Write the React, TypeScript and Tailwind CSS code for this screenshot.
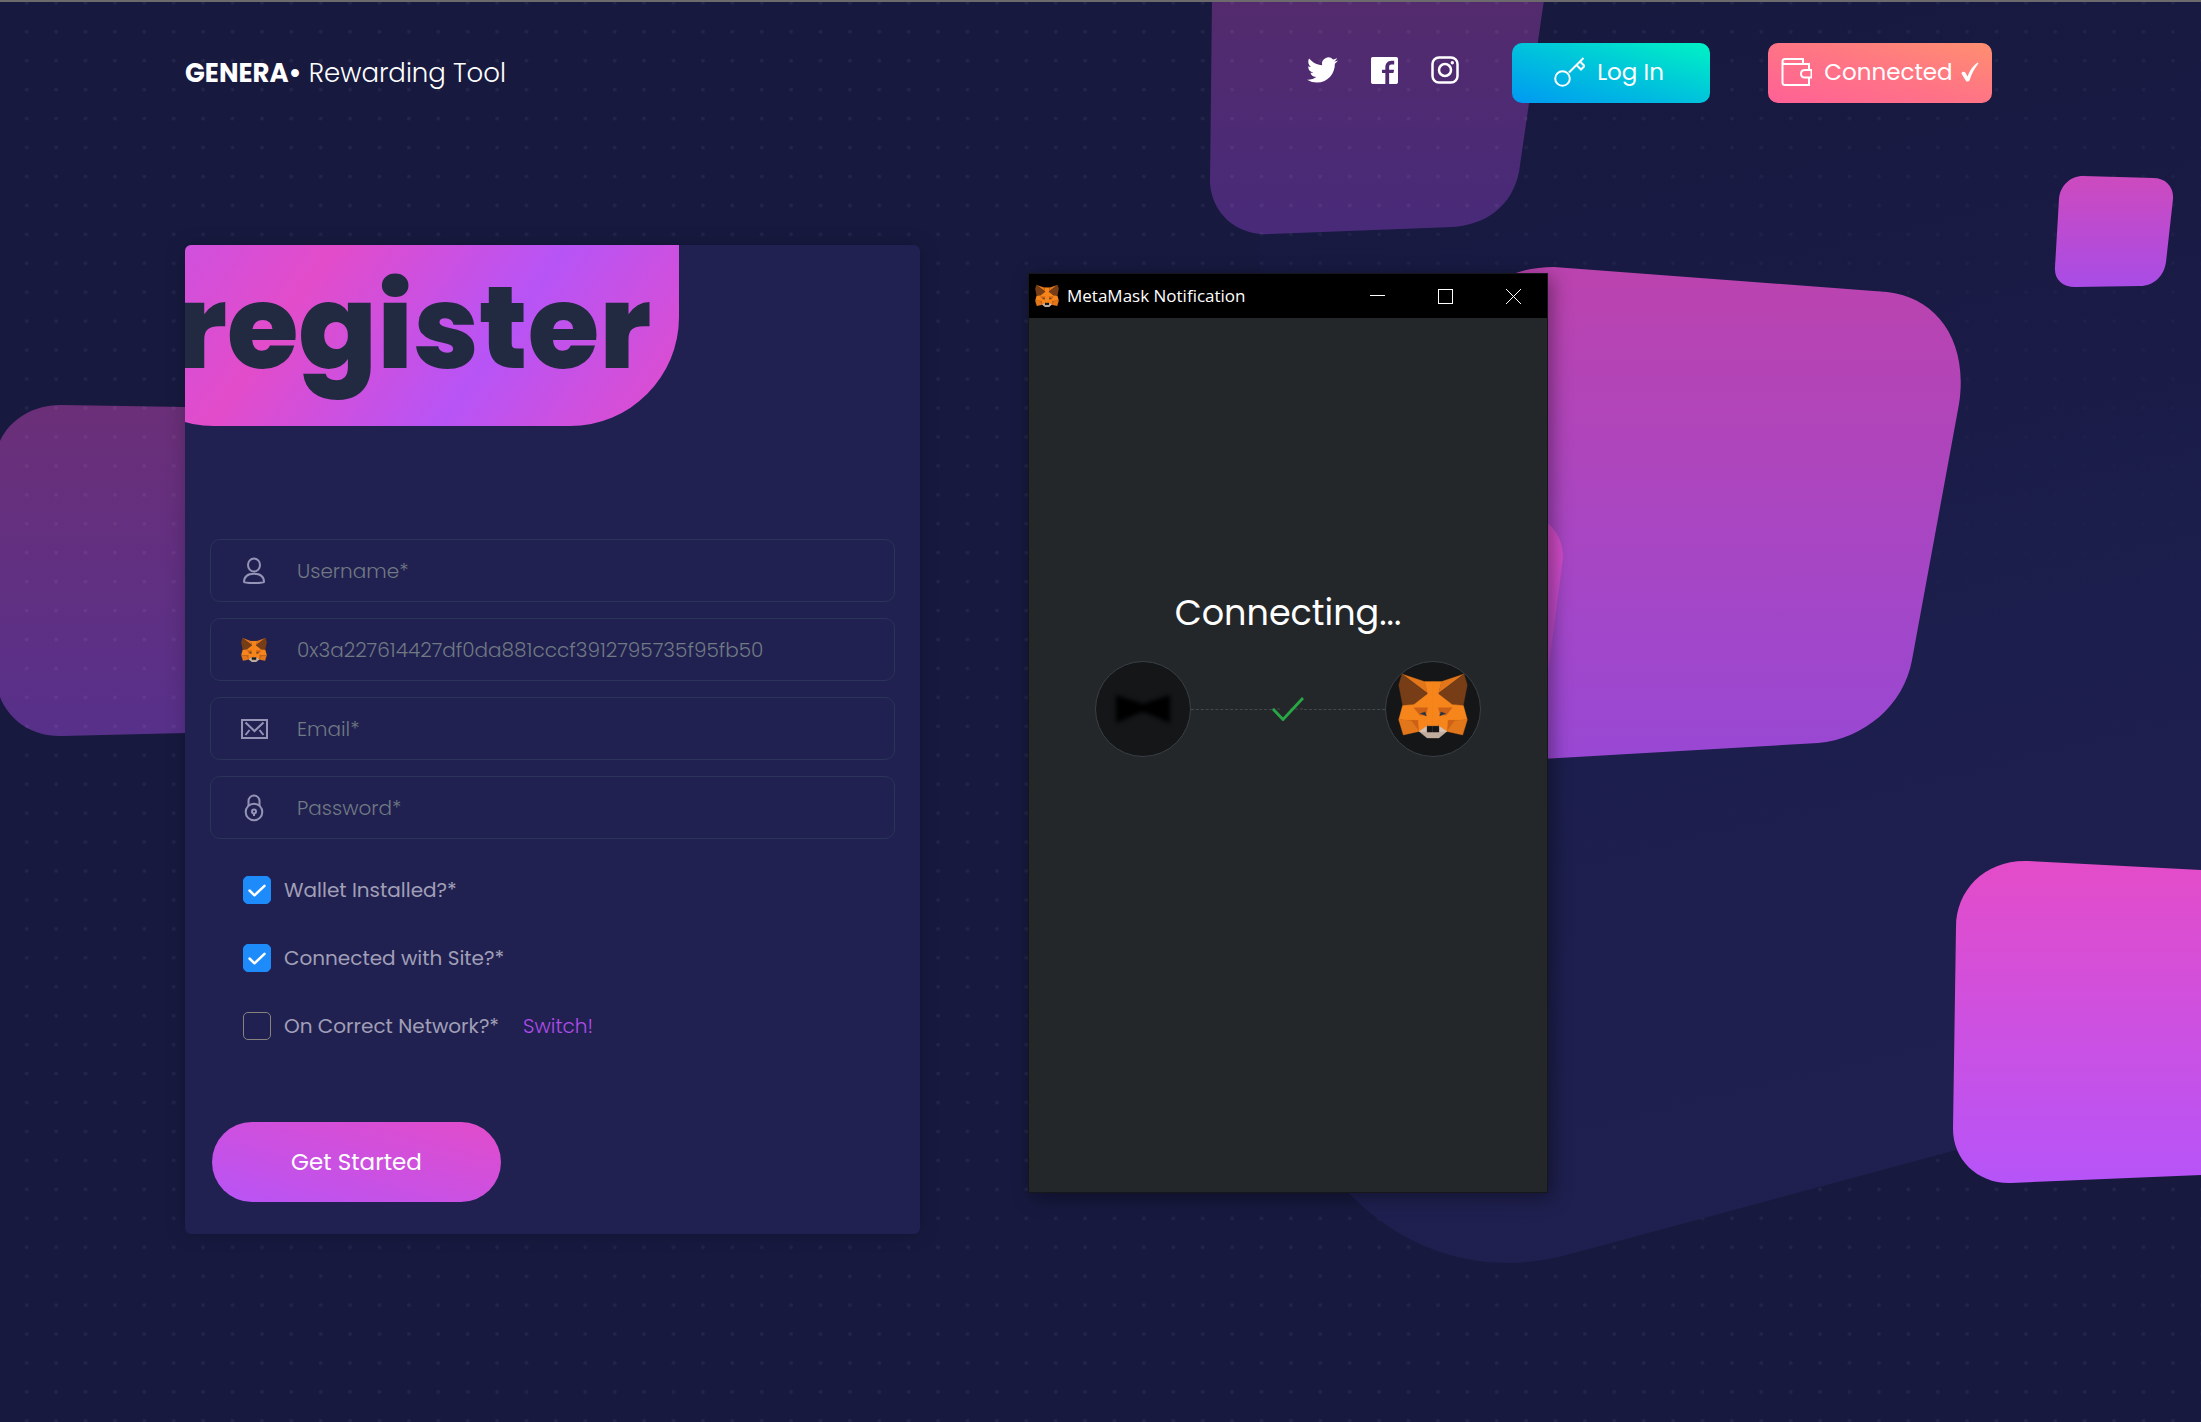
import React, { useId } from "react";

const HALF_FACE: [string, string][] = [
  ["-16,371 -92,407 -104,451 -45,453 0,470 0,371", "#f6851b"],
  ["-94,312 -26,335 -16,371", "#e2761b"],
  ["-94,312 -16,371 -58,404 -92,407 -104,345", "#763d16"],
  ["-26,335 0,335 0,470 -15,470 -22,433 -16,371", "#f6851b"],
  ["-104,451 -45,453 -42,486 -90,497", "#e2761b"],
  ["-66,453 -38,453 -40,486", "#cd6116"],
  ["-45,453 -22,436 -15,470 -42,486", "#f6851b"],
  ["-58,414 -16,414 -22,436 -40,437", "#cd6116"],
  ["-38,432 -24,427 -20,439", "#233447"],
  ["-42,486 -18,470 0,470 0,506 -18,506", "#c0ad9e"],
  ["-42,486 -18,470 -18,488", "#d7c1b3"],
  ["-18,470 0,470 0,488 -18,488", "#161616"],
];

function Fox({ className }: { className: string }) {
  const half = HALF_FACE.map(([points, fill]) => (
    <polygon key={points} points={points} fill={fill} stroke={fill} strokeWidth="1" />
  ));
  return (
    <svg viewBox="-106 309 212 200" className={className} aria-hidden="true">
      <g>{half}</g>
      <g transform="scale(-1 1)">{half}</g>
    </svg>
  );
}

const TOP_TILE = "M1212 0 L1210 183 C1212 214 1237 236 1270 234 L1452 227 C1486 225 1512 206 1519 172 L1544 0 Z";

function Backdrop() {
  return (
    <svg
      viewBox="0 0 2201 1422"
      preserveAspectRatio="xMidYMin slice"
      className="absolute -top-0.5 left-0 -z-10 h-[calc(100%+2px)] w-full"
      aria-hidden="true"
    >
      <defs>
        <pattern id="dots" x="12" y="17.2" width="29.4" height="28.94" patternUnits="userSpaceOnUse">
          <circle cx="14.7" cy="14.5" r="1.9" fill="#ffffff" opacity="0.05" />
        </pattern>
        <linearGradient id="blob" x1="0.4" y1="0" x2="0.58" y2="1">
          <stop offset="0" stopColor="#1b1b49" stopOpacity="0" />
          <stop offset="0.55" stopColor="#1c1e4d" stopOpacity="0.95" />
          <stop offset="1" stopColor="#202050" />
        </linearGradient>
        <linearGradient id="top" x1="0" y1="0" x2="0" y2="1">
          <stop offset="0" stopColor="#532b6d" />
          <stop offset="1" stopColor="#482a79" />
        </linearGradient>
        <linearGradient id="left" x1="0" y1="0" x2="0" y2="1">
          <stop offset="0" stopColor="#6b2f78" />
          <stop offset="1" stopColor="#57308a" />
        </linearGradient>
        <linearGradient id="big" x1="0" y1="0" x2="0" y2="1">
          <stop offset="0" stopColor="#bb43ae" />
          <stop offset="1" stopColor="#9848d4" />
        </linearGradient>
        <linearGradient id="inner" x1="0" y1="0" x2="0" y2="1">
          <stop offset="0" stopColor="#d84bc5" />
          <stop offset="1" stopColor="#b34acd" />
        </linearGradient>
        <linearGradient id="small" x1="0" y1="0" x2="0" y2="1">
          <stop offset="0" stopColor="#cd4abe" />
          <stop offset="1" stopColor="#a84ce6" />
        </linearGradient>
        <linearGradient id="bright" x1="0" y1="0" x2="0" y2="1">
          <stop offset="0" stopColor="#e44cc8" />
          <stop offset="1" stopColor="#b654f8" />
        </linearGradient>
      </defs>
      <path d="M185 407 L60 405 C34 405 10 419 0 441 V697 C10 722 34 737 62 736 L185 733 Z" fill="url(#left)" />
      <rect width="2201" height="1422" fill="url(#dots)" />
      <path d="M1250 0 L1290 1110 C1335 1200 1430 1292 1570 1254 L2201 1084 V0 Z" fill="url(#blob)" />
      <path d={TOP_TILE} fill="url(#top)" />
      <path d={TOP_TILE} fill="url(#dots)" />
      <path
        d="M1440 380 C1450 310 1490 267 1554 267 L1887 292 C1935 297 1969 339 1959 404 L1912 660 C1904 705 1864 739 1818 743 L1440 765 Z"
        fill="url(#big)"
      />
      <path d="M1500 510 C1535 508 1563 525 1563 558 L1548 672 L1500 690 Z" fill="url(#inner)" />
      <path
        d="M2083 176 L2153 178 C2166 178 2174 187 2173 199 L2166 262 C2164 276 2154 286 2140 286 L2075 287 C2062 287 2054 279 2055 267 L2059 199 C2060 186 2070 176 2083 176 Z"
        fill="url(#small)"
      />
      <path
        d="M2201 870 L2027 861 C1985 860 1956 890 1956 927 L1953 1129 C1953 1160 1978 1184 2011 1183 L2201 1175 Z"
        fill="url(#bright)"
      />
    </svg>
  );
}

function UserIcon() {
  return (
    <svg viewBox="0 0 28 28" className="size-7" fill="none" stroke="currentColor" strokeWidth="2" aria-hidden="true">
      <ellipse cx="14" cy="8" rx="6" ry="6.5" />
      <path d="M4 25.200c0-5.500 3.600-8.500 10-8.500s10 3 10 8.500c0 1-20 1-20 0Z" strokeLinejoin="round" />
    </svg>
  );
}

function MailIcon() {
  return (
    <svg viewBox="0 0 28 28" className="size-7" fill="none" stroke="currentColor" strokeWidth="2" aria-hidden="true">
      <rect x="2" y="5" width="25" height="18" />
      <path d="m5.500 7.500 9 8.500 9-8.500M5.500 20l4-5M23.500 20l-4-5" />
    </svg>
  );
}

function LockIcon() {
  return (
    <svg viewBox="0 0 28 28" className="size-7" fill="none" stroke="currentColor" strokeWidth="2" aria-hidden="true">
      <circle cx="14" cy="18" r="8.300" />
      <path d="M8.500 12V7a5.500 5.500 0 0 1 11 0v5M14 19.500V22" />
      <circle cx="14" cy="17.500" r="2" />
    </svg>
  );
}

function Field({
  icon,
  label,
  type = "text",
  value,
}: {
  icon: React.ReactNode;
  label: string;
  type?: string;
  value?: string;
}) {
  const id = useId();
  return (
    <div className="flex h-[63px] items-center gap-[29px] rounded-[10px] border border-[#2a3358] pr-6 pl-[29px]">
      <label htmlFor={id} aria-label={label} className="flex shrink-0 text-[#9593b6]">
        {icon}
      </label>
      <input
        id={id}
        type={type}
        placeholder={label}
        defaultValue={value}
        className="min-w-0 flex-1 bg-transparent text-[20px] font-light text-[#707984] outline-none placeholder:text-[#707984]"
      />
    </div>
  );
}

function Check({ label, checked = false, children }: { label: string; checked?: boolean; children?: React.ReactNode }) {
  const id = useId();
  return (
    <div className="flex h-7 items-center">
      <span className="grid size-7 shrink-0">
        <input
          id={id}
          type="checkbox"
          defaultChecked={checked}
          className="peer col-start-1 row-start-1 size-7 appearance-none rounded-[5px] border border-[#85827f] checked:border-[#1e8bfb] checked:bg-[#1e8bfb]"
        />
        <svg
          viewBox="0 0 28 28"
          className="pointer-events-none col-start-1 row-start-1 size-7 opacity-0 peer-checked:opacity-100"
          fill="none"
          stroke="#fff"
          strokeWidth="2.500"
          strokeLinecap="round"
          strokeLinejoin="round"
          aria-hidden="true"
        >
          <path d="m6.500 14.500 5 4.800 10-9.500" />
        </svg>
      </span>
      <label htmlFor={id} className="ml-[13px] text-[20px] text-[#a09fb7]">
        {label}
      </label>
      {children}
    </div>
  );
}

function Header() {
  return (
    <header className="flex items-center justify-between pt-[41px] text-white">
      <h1 className="text-[26px] leading-10 font-light">
        <span className="font-bold">GENERA•</span> Rewarding Tool
      </h1>
      <div className="flex items-center">
        <nav className="flex items-center gap-[33px] pb-1.5">
          <a href="#twitter" aria-label="Twitter">
            <svg viewBox="0 2 24 20" className="h-[26px] w-[31px]" fill="currentColor">
              <path d="M23.953 4.570a10 10 0 0 1-2.825.775 4.958 4.958 0 0 0 2.163-2.723 9.990 9.990 0 0 1-3.127 1.184 4.920 4.920 0 0 0-8.384 4.482C7.690 8.095 4.067 6.130 1.640 3.162a4.822 4.822 0 0 0-.666 2.475c0 1.710.870 3.213 2.188 4.096a4.904 4.904 0 0 1-2.228-.616v.060a4.923 4.923 0 0 0 3.946 4.827 4.996 4.996 0 0 1-2.212.085 4.936 4.936 0 0 0 4.604 3.417 9.867 9.867 0 0 1-6.102 2.105c-.390 0-.779-.023-1.170-.067a13.995 13.995 0 0 0 7.557 2.209c9.053 0 13.998-7.496 13.998-13.985 0-.210 0-.420-.015-.630A9.935 9.935 0 0 0 24 4.590z" />
            </svg>
          </a>
          <a href="#facebook" aria-label="Facebook">
            <svg viewBox="0 0 32 32" className="size-[27px]" fill="currentColor">
              <path d="M30 0H2C1 0 0 1 0 2v28c0 1 1 2 2 2h15V19h-4v-4h4v-3c0-4 3-7.500 7-7.500h3.500v4.500H24c-1.500 0-2.500 1-2.500 2.500V15h6l-1 4h-5v13H30c1 0 2-1 2-2V2c0-1-1-2-2-2z" />
            </svg>
          </a>
          <a href="#instagram" aria-label="Instagram">
            <svg viewBox="0 0 28 28" className="size-7" fill="none" stroke="currentColor" strokeWidth="2.500">
              <rect x="1.500" y="1.500" width="25" height="25" rx="6.500" />
              <circle cx="14" cy="14" r="6" />
              <circle cx="21.300" cy="6.700" r="1.700" fill="currentColor" stroke="none" />
            </svg>
          </a>
        </nav>
        <button
          type="button"
          className="ml-[53px] flex h-[60px] w-[198px] items-center justify-center gap-3 rounded-[10px] bg-[linear-gradient(to_top_right,#0099f2,#00c3dc_50%,#00f3c4)] pr-1 pb-0.5 text-[23px]"
        >
          <svg viewBox="0 0 31 30" className="h-[30px] w-[31px]" fill="none" stroke="currentColor" strokeWidth="2" aria-hidden="true">
            <circle cx="8.500" cy="21.500" r="7.300" />
            <path d="M15 15.500 29.500 1M22.500 8l4.500 4.500 3.500-3.500L26.500 5" />
          </svg>
          Log In
        </button>
        <button
          type="button"
          className="ml-[58px] flex h-[60px] w-[224px] items-center justify-center gap-3 rounded-[10px] bg-[linear-gradient(to_top_right,#ff6196,#ff7485_50%,#ff8f70)] pb-0.5 text-[23px]"
        >
          <svg viewBox="0 0 31 30" className="h-[30px] w-[31px] shrink-0" fill="none" stroke="currentColor" strokeWidth="2" aria-hidden="true">
            <path d="M22 6V2H4C2.500 2 1.500 3 1.500 4.500v21C1.500 27 2.500 28 4 28h24v-7.500M1.500 5c0 1.500 1 2 2.500 2h24v6" />
            <path d="M30.500 13H24c-2.500 0-4 1.500-4 3.700s1.500 3.800 4 3.800h6.500Z" />
          </svg>
          <span className="flex items-center gap-2">
            Connected
            <svg viewBox="0 0 18 20" className="h-5 w-[18px]" fill="currentColor" aria-hidden="true">
              <path d="M0.500 11.500c0-2 3-2.500 4-.8l2 3.800C8.500 9 11.500 4 16.500 0.500l1 .800C13.500 6.500 10.500 12 8.500 18.500c-.8 1.300-3.200 1.300-3.800 0Z" />
            </svg>
          </span>
        </button>
      </div>
    </header>
  );
}

function RegisterCard() {
  return (
    <form className="overflow-hidden rounded-md bg-[#202150] pb-8 shadow-[0_0_20px_rgba(0,0,0,0.2)]">
      <div className="-ml-20 flex h-[181px] w-[574px] items-center justify-end rounded-b-[109px] bg-[linear-gradient(125deg,#c652e8_0%,#e24cca_33%,#b754f6_66%,#e24cca_100%)] pr-7">
        <h2 className="pb-4 text-[116px] leading-none font-extrabold text-[#222a41]">register</h2>
      </div>
      <div className="mt-[113px] flex flex-col gap-4 px-[25px]">
        <Field icon={<UserIcon />} label="Username*" />
        <Field
          icon={<Fox className="size-7 p-px" />}
          label="Wallet address"
          value="0x3a227614427df0da881cccf3912795735f95fb50"
        />
        <Field icon={<MailIcon />} label="Email*" type="email" />
        <Field icon={<LockIcon />} label="Password*" type="password" />
      </div>
      <div className="mt-[37px] flex flex-col gap-10 px-[58px]">
        <Check label="Wallet Installed?*" checked />
        <Check label="Connected with Site?*" checked />
        <Check label="On Correct Network?*">
          <a href="#switch" className="ml-6 text-[20px] font-light text-[#b14be9]">
            Switch!
          </a>
        </Check>
      </div>
      <button
        type="button"
        className="mt-[82px] ml-[27px] h-20 w-[289px] rounded-full bg-[linear-gradient(to_top_right,#b754f6,#e24cca)] text-[23px] text-white"
      >
        Get Started
      </button>
    </form>
  );
}

function WalletWindow() {
  return (
    <section className="mt-7 flex h-[920px] flex-col border border-[#15171b] bg-[#24272a] shadow-[4px_4px_18px_rgba(0,0,0,0.4)]">
      <div className="flex h-11 items-center bg-black text-white">
        <Fox className="ml-1.5 size-6" />
        <span className="ml-2 flex-1 font-['Open_Sans','Noto_Sans',sans-serif] text-[17px]">MetaMask Notification</span>
        <div className="flex gap-[53px] pr-[26px]">
          <button type="button" aria-label="Minimize">
            <svg viewBox="0 0 15 15" className="size-[15px]" stroke="currentColor">
              <path d="M0 6.500h15" />
            </svg>
          </button>
          <button type="button" aria-label="Maximize">
            <svg viewBox="0 0 15 15" className="size-[15px]" fill="none" stroke="currentColor">
              <rect x="0.500" y="0.500" width="14" height="14" />
            </svg>
          </button>
          <button type="button" aria-label="Close">
            <svg viewBox="0 0 15 15" className="size-[15px]" stroke="currentColor">
              <path d="m0 0 15 15M15 0 0 15" />
            </svg>
          </button>
        </div>
      </div>
      <p className="mt-[271px] text-center text-[35px] leading-12 text-white">Connecting...</p>
      <div className="mt-6 flex items-center px-[66px]">
        <div className="flex size-24 items-center justify-center rounded-full border border-[#3b4046] bg-[#141618]">
          <svg viewBox="0 0 60 34" className="h-[34px] w-[60px] blur-[2px]" aria-hidden="true">
            <path d="M3 3 C12 6 20 8 30 12 C40 8 48 6 57 3 V31 C48 28 40 23 30 20 C20 23 12 28 3 31 Z" fill="#000" />
          </svg>
        </div>
        <div className="flex flex-1 items-center">
          <div className="flex-1 border-t border-dashed border-[#43484d]" />
          <svg viewBox="0 0 32 24" className="h-6 w-8" fill="none" aria-hidden="true">
            <path d="M0 12h8M18 12h14" stroke="#43484d" strokeDasharray="3 2" />
            <path d="m1 12 10 10.500L31 1" stroke="#28a745" strokeWidth="2.800" />
          </svg>
          <div className="flex-1 border-t border-dashed border-[#43484d]" />
        </div>
        <div className="flex size-24 items-center justify-center rounded-full border border-[#3b4046] bg-[#141618] pb-1.5">
          <Fox className="h-[66px] w-[70px]" />
        </div>
      </div>
    </section>
  );
}

export default function App() {
  return (
    <div className="relative isolate min-h-screen overflow-hidden border-t-2 border-[#6c6a6c] bg-[#17193f] pr-[209px] pb-16 pl-[185px] font-['Poppins','Inter',sans-serif]">
      <Backdrop />
      <Header />
      <main className="mt-[142px] grid grid-cols-[735fr_108fr_520fr_444fr] items-start">
        <RegisterCard />
        <div className="col-start-3">
          <WalletWindow />
        </div>
      </main>
    </div>
  );
}
